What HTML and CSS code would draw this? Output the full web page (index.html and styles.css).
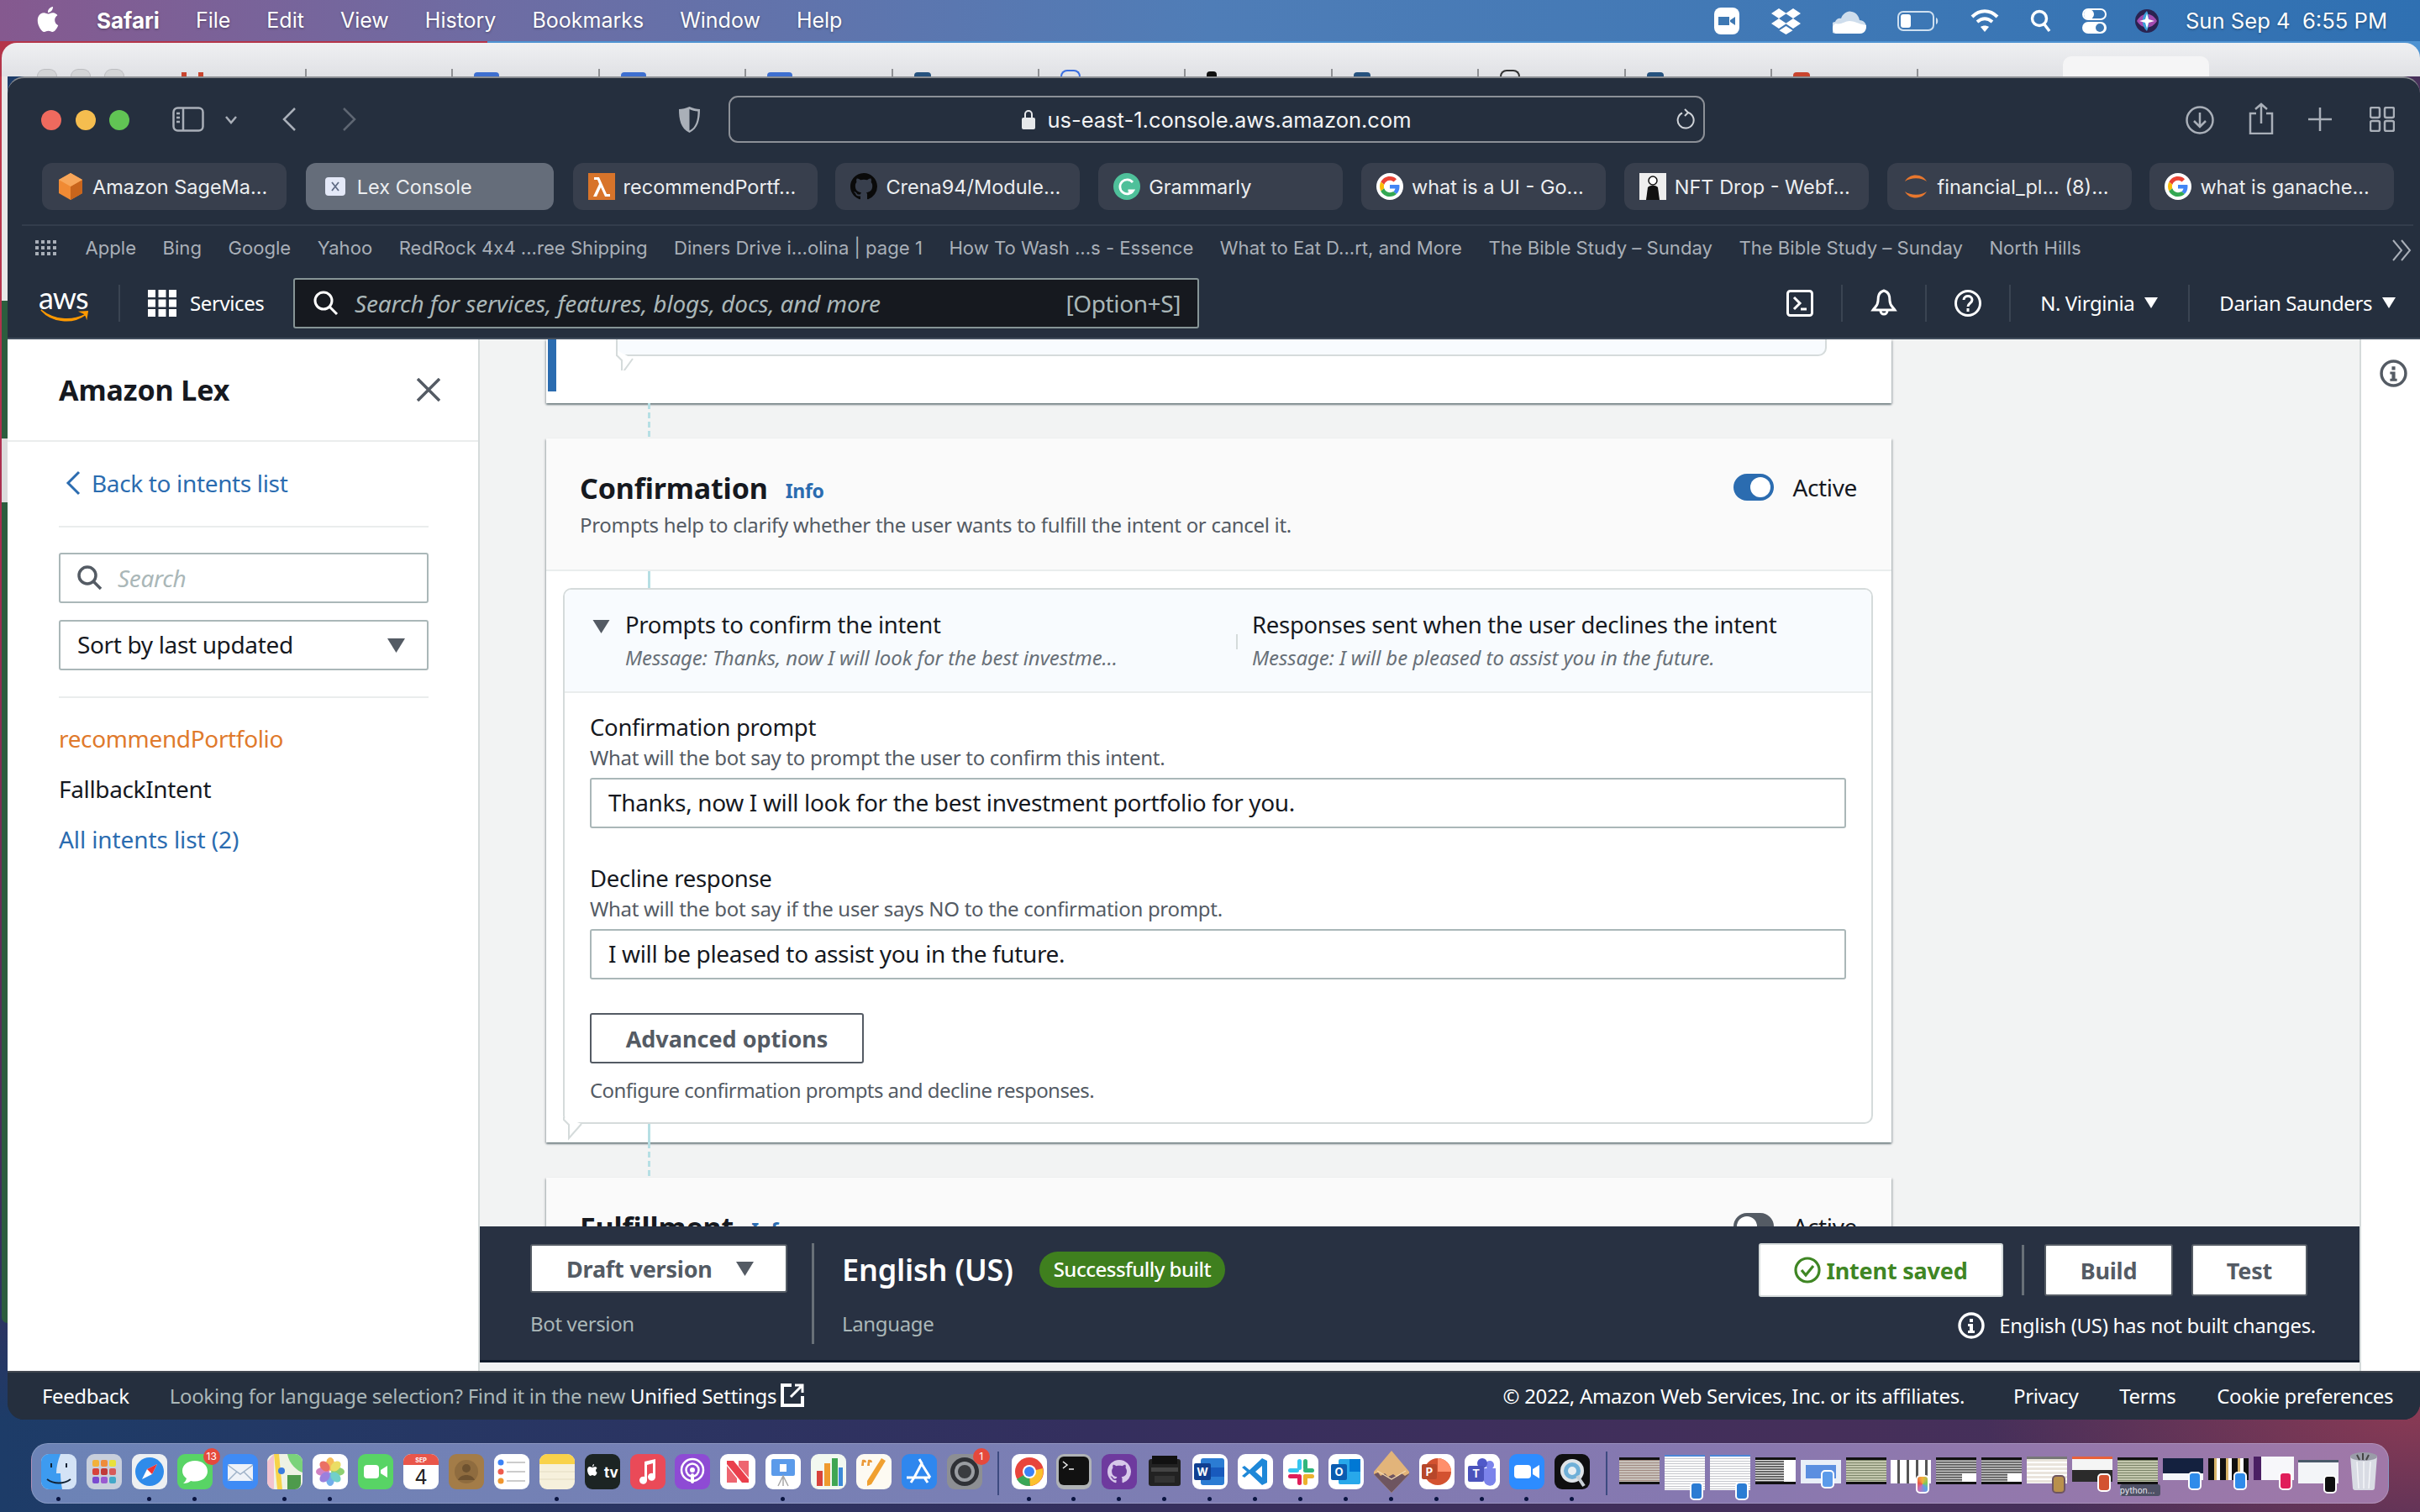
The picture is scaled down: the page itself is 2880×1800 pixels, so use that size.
FILE: index.html
```html
<!DOCTYPE html>
<html lang="en">
<head>
  <meta charset="UTF-8" />
  <title>Amazon Lex - Safari</title>
  <link rel="stylesheet" href="styles.css">
</head>
<body>

<svg class="defs" width="0" height="0">
  <symbol id="google" viewBox="-8 -8 64 64">
    <circle cx="24" cy="24" r="32" fill="#fff"/>
    <path fill="#EA4335" d="M24 9.5c3.54 0 6.71 1.22 9.21 3.6l6.85-6.85C35.9 2.38 30.47 0 24 0 14.62 0 6.51 5.38 2.56 13.22l7.98 6.19C12.43 13.72 17.74 9.5 24 9.5z"/>
    <path fill="#4285F4" d="M46.98 24.55c0-1.57-.15-3.09-.38-4.55H24v9.02h12.94c-.58 2.96-2.26 5.48-4.78 7.18l7.73 6c4.51-4.18 7.09-10.36 7.09-17.65z"/>
    <path fill="#FBBC05" d="M10.53 28.59c-.48-1.45-.76-2.99-.76-4.59s.27-3.14.76-4.59l-7.98-6.19C.92 16.46 0 20.12 0 24c0 3.88.92 7.54 2.56 10.78l7.97-6.19z"/>
    <path fill="#34A853" d="M24 48c6.48 0 11.93-2.13 15.89-5.81l-7.73-6c-2.15 1.45-4.92 2.3-8.16 2.3-6.26 0-11.57-4.22-13.47-9.91l-7.98 6.19C6.51 42.62 14.62 48 24 48z"/>
  </symbol>
  <symbol id="caret" viewBox="0 0 20 16"><path d="M0 0h20L10 16z" fill="currentColor"/></symbol>
  <symbol id="octo" viewBox="0 0 16 16"><path fill="currentColor" d="M8 0C3.58 0 0 3.58 0 8c0 3.54 2.29 6.53 5.47 7.59.4.07.55-.17.55-.38 0-.19-.01-.82-.01-1.49-2.01.37-2.53-.49-2.69-.94-.09-.23-.48-.94-.82-1.13-.28-.15-.68-.52-.01-.53.63-.01 1.08.58 1.23.82.72 1.21 1.87.87 2.33.66.07-.52.28-.87.51-1.07-1.78-.2-3.64-.89-3.64-3.95 0-.87.31-1.59.82-2.15-.08-.2-.36-1.02.08-2.12 0 0 .67-.21 2.2.82.64-.18 1.32-.27 2-.27.68 0 1.36.09 2 .27 1.53-1.04 2.2-.82 2.2-.82.44 1.1.16 1.92.08 2.12.51.56.82 1.27.82 2.15 0 3.07-1.87 3.75-3.65 3.95.29.25.54.73.54 1.48 0 1.07-.01 1.93-.01 2.2 0 .21.15.46.55.38A8.013 8.013 0 0016 8c0-4.42-3.58-8-8-8z"/></symbol>
  <symbol id="infoc" viewBox="0 0 32 32"><circle cx="16" cy="16" r="14" fill="none" stroke="currentColor" stroke-width="3.4"/><path fill="currentColor" d="M14 8h4v4h-4zM12 14h6v8h2v3h-8v-3h2v-5h-2z"/></symbol>
</svg>

<!-- mac menu bar -->
<header class="menubar">
  <svg class="apple" viewBox="0 0 24 24"><path fill="#fff" d="M12.152 6.896c-.948 0-2.415-1.078-3.96-1.04-2.04.027-3.91 1.183-4.961 3.014-2.117 3.675-.546 9.103 1.519 12.09 1.013 1.454 2.208 3.09 3.792 3.039 1.52-.065 2.09-.987 3.935-.987 1.831 0 2.35.987 3.96.948 1.637-.026 2.676-1.48 3.676-2.948 1.156-1.688 1.636-3.325 1.662-3.415-.039-.013-3.182-1.221-3.22-4.857-.026-3.04 2.48-4.494 2.597-4.559-1.429-2.09-3.623-2.324-4.39-2.376-2-.156-3.675 1.09-4.61 1.09zM15.53 3.83c.843-1.012 1.4-2.427 1.245-3.83-1.207.052-2.662.805-3.532 1.818-.78.896-1.454 2.338-1.273 3.714 1.338.104 2.715-.688 3.559-1.701"/></svg>
  <nav class="menu">
    <b>Safari</b><span>File</span><span>Edit</span><span>View</span><span>History</span><span>Bookmarks</span><span>Window</span><span>Help</span>
  </nav>
  <div class="status">
    <svg width="30" height="32" viewBox="0 0 30 32"><rect width="30" height="32" rx="8" fill="#fff"/><path d="M5 11h13v10H5zM19 15l6-4v10l-6-4z" fill="#3e78b3"/></svg>
    <svg width="37" height="32" viewBox="0 0 37 32" fill="#fff"><path d="M10 1l9 6-9 6-9-6zM27 1l9 6-9 6-9-6zM10 13l9 6-9 6-9-6zM27 13l9 6-9 6-9-6zM18.500 22l8 5.300-8 4.700-8-4.700z"/></svg>
    <svg width="40" height="30" viewBox="0 0 40 30"><path fill="#fff" d="M4 30a7 7 0 01-1-14c1-3 4-5 7-4 2-6 8-10 13-8 5 1 8 5 9 10 5 0 8 4 8 8 0 5-3 8-8 8z" opacity=".75"/><path fill="#fff" d="M4 30a7 7 0 01-1-12c7 2 12-3 17-3 6 0 9 3 20 5 0 6-3 10-8 10z"/></svg>
    <svg width="50" height="24" viewBox="0 0 50 24"><rect x="1" y="1" width="42" height="22" rx="6" fill="none" stroke="#cfe0f0" stroke-width="2"/><rect x="4" y="4" width="12" height="16" rx="3" fill="#fff"/><path d="M46 8c3 1 3 7 0 8z" fill="#cfe0f0"/></svg>
    <svg width="34" height="28" viewBox="0 0 34 28" fill="none" stroke="#fff" stroke-width="4"><path d="M2 9c9-9 21-9 30 0M8 15c6-5 12-5 18 0"/><path d="M17 27l-5-6c3-2 7-2 10 0z" fill="#fff" stroke="none"/></svg>
    <svg width="25" height="28" viewBox="0 0 25 28" fill="none" stroke="#fff" stroke-width="3.400"><circle cx="11" cy="11" r="8.500"/><path d="M17 18l6 8"/></svg>
    <svg width="29" height="30" viewBox="0 0 29 30"><rect x="1" y="1" width="27" height="12" rx="6" fill="none" stroke="#fff" stroke-width="2"/><circle cx="8" cy="7" r="6" fill="#fff"/><rect y="16" width="29" height="14" rx="7" fill="#fff"/><circle cx="21" cy="23" r="5" fill="#3e78b3"/></svg>
    <svg class="siri" width="28" height="28" viewBox="0 0 28 28"><circle cx="14" cy="14" r="14" fill="#2a2350"/><path d="M2 14C8 3 20 3 26 14 20 24 8 24 2 14z" fill="#a24bb0"/><path d="M14 26c-7-6-7-18 0-24 3 6 3 18 0 24z" fill="#3aa0d8"/><path d="M14 5l2 7 7 2-7 2-2 7-2-7-7-2 7-2z" fill="#fff"/></svg>
    <span class="clock">Sun Sep 4&nbsp; 6:55 PM</span>
  </div>
</header>

<!-- second safari window behind, only its top shows -->
<div class="behind-line">
  <div class="behind">
    <div class="ghost-lights"><i></i><i></i><i></i></div>
    <div class="ghost-tab"></div>
    <div class="ghost-tab"><em class="cap blue"></em></div>
    <div class="ghost-tab"><em class="cap blue"></em></div>
    <div class="ghost-tab"><em class="cap blue"></em></div>
    <div class="ghost-tab"><em class="cap navy"></em></div>
    <div class="ghost-tab"><em class="cap arc"></em></div>
    <div class="ghost-tab"><em class="cap blk"></em></div>
    <div class="ghost-tab"><em class="cap navy"></em></div>
    <div class="ghost-tab"><em class="cap arc dark"></em></div>
    <div class="ghost-tab"><em class="cap navy"></em></div>
    <div class="ghost-tab"><em class="cap red"></em></div>
    <div class="ghost-tab"></div>
    <div class="ghost-active"></div>
  </div>
</div>

<div class="stage">
  <div class="edge"></div>

  <div class="safari">
    <div class="toolbar">
      <div class="lights"><i class="l-red"></i><i class="l-yel"></i><i class="l-grn"></i></div>
      <svg class="tb sidebar-ic" width="38" height="30" viewBox="0 0 38 30" fill="none" stroke="#a9afb8" stroke-width="2.500"><rect x="1.500" y="1.500" width="35" height="27" rx="5"/><path d="M13 2v26M5 8h4M5 13h4M5 18h4"/></svg>
      <svg class="tb chev" width="14" height="10" viewBox="0 0 14 10" fill="none" stroke="#a9afb8" stroke-width="2.500"><path d="M1 1l6 7 6-7"/></svg>
      <svg class="tb back" width="18" height="30" viewBox="0 0 18 30" fill="none" stroke="#a9afb8" stroke-width="2.500"><path d="M16 2L3 15l13 13"/></svg>
      <svg class="tb fwd" width="18" height="30" viewBox="0 0 18 30" fill="none" stroke="#5e6672" stroke-width="2.500"><path d="M2 2l13 13L2 28"/></svg>
      <svg class="tb shield" width="27" height="33" viewBox="0 0 27 33"><path d="M13.500 1C9 3 5 4 1 4c0 12 2 23 12.500 28C24 27 26 16 26 4c-4 0-8-1-12.500-3z" fill="#a9afb8"/><path d="M13.500 4c3 1.400 6 2.200 10 2.400 0 10-2 19-10 23z" fill="#252f3e"/></svg>
      <div class="url">
        <svg width="16" height="24" viewBox="0 0 16 24"><path d="M4 11V6a4 4 0 018 0v5" fill="none" stroke="#e6e8ea" stroke-width="2"/><rect y="10" width="16" height="14" rx="2" fill="#e6e8ea"/></svg>
        <span>us-east-1.console.aws.amazon.com</span>
        <svg class="reload" width="22" height="26" viewBox="0 0 22 26" fill="none" stroke="#cfd3d8" stroke-width="2"><path d="M14 5a9.500 9.500 0 11-7 .5"/><path d="M10 1l4 4-4 4"/></svg>
      </div>
      <svg class="tb dl" width="36" height="34" viewBox="0 0 36 34" fill="none" stroke="#a9afb8" stroke-width="2.500"><circle cx="18" cy="17" r="15.500"/><path d="M18 8v17M11 18l7 7 7-7"/></svg>
      <svg class="tb share" width="30" height="38" viewBox="0 0 30 38" fill="none" stroke="#a9afb8" stroke-width="2.500"><path d="M9 13H2v24h26V13h-7M15 25V2M8 8l7-6 7 6"/></svg>
      <svg class="tb plus" width="28" height="28" viewBox="0 0 28 28" fill="none" stroke="#a9afb8" stroke-width="2.500"><path d="M14 0v28M0 14h28"/></svg>
      <svg class="tb tabs-ic" width="30" height="30" viewBox="0 0 30 30" fill="none" stroke="#a9afb8" stroke-width="2.500"><rect x="1" y="1" width="11" height="12" rx="2"/><rect x="18" y="1" width="11" height="12" rx="2"/><rect x="1" y="17" width="11" height="12" rx="2"/><rect x="18" y="17" width="11" height="12" rx="2"/></svg>
    </div>

    <div class="tabs">
      <div class="tab">
        <svg width="32" height="32" viewBox="0 0 32 32"><path d="M16 0l14 8v16l-14 8-14-8V8z" fill="#f08a34"/><path d="M16 16l14-8v16l-14 8z" fill="#c9651c"/><path d="M16 0l14 8-14 8L2 8z" fill="#f7a65a"/></svg>
        <span>Amazon SageMa...</span>
      </div>
      <div class="tab active">
        <svg width="24" height="22" viewBox="0 0 24 22"><rect width="24" height="22" rx="4" fill="#e4e9f8"/><path d="M8 6l8 10M16 6L8 16" stroke="#5f6b85" stroke-width="1.800"/></svg>
        <span>Lex Console</span>
      </div>
      <div class="tab">
        <svg width="32" height="32" viewBox="0 0 32 32"><rect width="32" height="32" fill="#d8742a"/><path d="M7 5h6l9 20h4v3h-6l-5-11-5 11H6l7-15-2-5H7z" fill="#fff"/></svg>
        <span>recommendPortf...</span>
      </div>
      <div class="tab">
        <svg class="blk-ic" width="32" height="32"><use href="#octo"/></svg>
        <span>Crena94/Module...</span>
      </div>
      <div class="tab">
        <svg width="32" height="32" viewBox="0 0 32 32"><circle cx="16" cy="16" r="16" fill="#4fc09a"/><path d="M23 11a8.500 8.500 0 10.500 10h-6" fill="none" stroke="#fff" stroke-width="2.800"/></svg>
        <span>Grammarly</span>
      </div>
      <div class="tab"><svg width="32" height="32"><use href="#google"/></svg><span>what is a UI - Go...</span></div>
      <div class="tab">
        <svg width="32" height="32" viewBox="0 0 32 32"><rect width="32" height="32" fill="#eee"/><circle cx="16" cy="9" r="5" fill="#fff" stroke="#111" stroke-width="1.500"/><path d="M8 32l2-15c3-3 9-3 12 0l2 15z" fill="#111"/></svg>
        <span>NFT Drop - Webf...</span>
      </div>
      <div class="tab">
        <svg width="32" height="32" viewBox="0 0 32 32" fill="#e8772e"><path d="M3 10c5-10 21-10 26 0-7-5-19-5-26 0zM3 22c5 10 21 10 26 0-7 5-19 5-26 0z"/></svg>
        <span>financial_pl... (8)...</span>
      </div>
      <div class="tab"><svg width="32" height="32"><use href="#google"/></svg><span>what is ganache...</span></div>
    </div>

    <div class="hair"></div>

    <div class="bookmarks">
      <svg class="bk-grid" width="26" height="18" viewBox="0 0 26 18" fill="#a9afb8"><path d="M0 0h4v4H0zM7 0h4v4H7zM14 0h4v4h-4zM21 0h4v4h-4zM0 7h4v4H0zM7 7h4v4H7zM14 7h4v4h-4zM21 7h4v4h-4zM0 14h4v4H0zM7 14h4v4H7zM14 14h4v4h-4zM21 14h4v4h-4z"/></svg>
      <span>Apple</span><span>Bing</span><span>Google</span><span>Yahoo</span><span>RedRock 4x4 ...ree Shipping</span><span>Diners Drive i...olina | page 1</span><span>How To Wash ...s - Essence</span><span>What to Eat D...rt, and More</span><span>The Bible Study – Sunday</span><span>The Bible Study – Sunday</span><span>North Hills</span>
      <svg class="bk-more" width="26" height="30" viewBox="0 0 26 30" fill="none" stroke="#a9afb8" stroke-width="2"><path d="M3 3l10 12L3 27M13 3l10 12-10 12"/></svg>
    </div>

    <div class="awsnav">
      <div class="aws-logo">
        <span>aws</span>
        <svg width="62" height="16" viewBox="0 0 62 16"><path d="M1 1c16 13 38 15 56 6-16 12-42 10-56-6z" fill="#f90" stroke="#f90" stroke-width="1.500"/><path d="M48 3l13-1-2 12c-1-4-2-6-4-8z" fill="#f90"/></svg>
      </div>
      <div class="services">
        <svg width="34" height="32" viewBox="0 0 34 32" fill="#fff"><path d="M0 0h9v9H0zM12.500 0h9v9h-9zM25 0h9v9h-9zM0 11.500h9v9H0zM12.500 11.500h9v9h-9zM25 11.500h9v9h-9zM0 23h9v9H0zM12.500 23h9v9h-9zM25 23h9v9h-9z"/></svg>
        <span>Services</span>
      </div>
      <div class="searchbox">
        <svg width="30" height="30" viewBox="0 0 30 30" fill="none" stroke="#fff" stroke-width="3"><circle cx="12" cy="12" r="10"/><path d="M19 19l9 9"/></svg>
        <em>Search for services, features, blogs, docs, and more</em>
        <span>[Option+S]</span>
      </div>
      <div class="nav-right">
        <div class="nav-ic"><svg width="32" height="32" viewBox="0 0 32 32" fill="none" stroke="#fff" stroke-width="3"><rect x="1.500" y="1.500" width="29" height="29" rx="3"/><path d="M9 9l7 7-7 7M17 23h7"/></svg></div>
        <div class="nav-ic"><svg width="32" height="34" viewBox="0 0 32 34" fill="none" stroke="#fff" stroke-width="3"><path d="M16 2c-6 2-7 6-7 12s-4 8-6 11h26c-2-3-6-5-6-11S22 4 16 2zM12 26a4 4 0 008 0"/></svg></div>
        <div class="nav-ic"><svg width="32" height="32" viewBox="0 0 32 32" fill="none" stroke="#fff" stroke-width="3"><circle cx="16" cy="16" r="14.500"/><path d="M11 12c0-6 10-6 10 0 0 4-5 4-5 8"/><path d="M16 22v4"/></svg></div>
        <div class="nav-txt">N. Virginia <svg class="nav-caret" width="16" height="13"><use href="#caret"/></svg></div>
        <div class="nav-txt last">Darian Saunders <svg class="nav-caret" width="16" height="13"><use href="#caret"/></svg></div>
      </div>
    </div>

    <div class="main">
      <aside class="side">
        <div class="side-head">
          <h2>Amazon Lex</h2>
          <svg width="28" height="28" viewBox="0 0 28 28" stroke="#545b64" stroke-width="3.500"><path d="M1 1l26 26M27 1L1 27"/></svg>
        </div>
        <div class="side-body">
          <a class="back-link">
            <svg width="18" height="30" viewBox="0 0 18 30" fill="none" stroke="#2b6cb0" stroke-width="3"><path d="M16 2L3 15l13 13"/></svg>
            Back to intents list
          </a>
          <div class="side-rule"></div>
          <div class="side-field search-f">
            <svg width="30" height="30" viewBox="0 0 30 30" fill="none" stroke="#545b64" stroke-width="3.500"><circle cx="12" cy="12" r="10"/><path d="M19 19l9 9"/></svg>
            <em>Search</em>
          </div>
          <div class="side-field select-f">
            <span>Sort by last updated</span>
            <svg class="caret" width="21" height="17"><use href="#caret"/></svg>
          </div>
          <div class="side-rule lower"></div>
          <a class="intent current">recommendPortfolio</a>
          <a class="intent">FallbackIntent</a>
          <a class="intent all">All intents list (2)</a>
        </div>
      </aside>

      <section class="center">
        <div class="canvas">
          <div class="card stub">
            <div class="stub-bar"></div>
            <div class="bubble-stub">
              <svg class="tail" width="24" height="24" viewBox="0 0 24 24"><path d="M1 0l0 6 6 6 0 16L20 10" fill="#fff" stroke="#d5dbdb" stroke-width="2"/></svg>
            </div>
          </div>
          <div class="link dashed"></div>

          <div class="card">
            <div class="card-head">
              <div class="card-title">
                <h3>Confirmation</h3><a class="info">Info</a>
                <div class="toggle-wrap"><i class="toggle on"></i><span>Active</span></div>
              </div>
              <p>Prompts help to clarify whether the user wants to fulfill the intent or cancel it.</p>
            </div>
            <div class="link solid"></div>
            <div class="box">
              <div class="box-head">
                <div class="col-a">
                  <svg class="caret" width="21" height="16"><use href="#caret"/></svg>
                  <div>
                    <h4>Prompts to confirm the intent</h4>
                    <em>Message: Thanks, now I will look for the best investme…</em>
                  </div>
                </div>
                <div class="col-b">
                  <h4>Responses sent when the user declines the intent</h4>
                  <em>Message: I will be pleased to assist you in the future.</em>
                </div>
              </div>
              <div class="box-body">
                <label class="fld-label">Confirmation prompt</label>
                <div class="fld-desc">What will the bot say to prompt the user to confirm this intent.</div>
                <input class="fld-input" value="Thanks, now I will look for the best investment portfolio for you." />
                <label class="fld-label second">Decline response</label>
                <div class="fld-desc">What will the bot say if the user says NO to the confirmation prompt.</div>
                <input class="fld-input" value="I will be pleased to assist you in the future." />
                <button class="adv">Advanced options</button>
                <div class="fld-desc conf">Configure confirmation prompts and decline responses.</div>
              </div>
            </div>
            <div class="box-foot">
              <svg class="tail" width="28" height="28" viewBox="0 0 28 28"><path d="M1 0l0 3 6 6 0 16L22 8" fill="#fff" stroke="#d5dbdb" stroke-width="2"/></svg>
              <div class="link solid tall-link"></div>
            </div>
          </div>
          <div class="link dashed"></div>

          <div class="card">
            <div class="card-head">
              <div class="card-title">
                <h3>Fulfillment</h3><a class="info">Info</a>
                <div class="toggle-wrap"><i class="toggle"></i><span>Active</span></div>
              </div>
            </div>
          </div>
        </div>

        <div class="bar">
          <div class="bar-ver">
            <button class="bar-btn draft">Draft version <svg width="21" height="17"><use href="#caret"/></svg></button>
            <small>Bot version</small>
          </div>
          <div class="bar-sep"></div>
          <div class="bar-lang">
            <div class="lang-row"><b>English (US)</b><span class="badge">Successfully built</span></div>
            <small>Language</small>
          </div>
          <div class="bar-right">
            <div class="bar-actions">
              <button class="bar-btn saved">
                <svg width="32" height="32" viewBox="0 0 32 32" fill="none" stroke="#3f8624" stroke-width="3.200"><circle cx="16" cy="16" r="14"/><path d="M9 16l5 6 9-11"/></svg>
                Intent saved
              </button>
              <i class="act-sep"></i>
              <button class="bar-btn build">Build</button>
              <button class="bar-btn test">Test</button>
            </div>
            <div class="bar-note">
              <svg width="32" height="32"><use href="#infoc"/></svg>
              <span>English (US) has not built changes.</span>
            </div>
          </div>
        </div>
        <div class="bar-gap"></div>
      </section>

      <aside class="tools"><svg class="tools-ic" width="33" height="33"><use href="#infoc"/></svg></aside>
    </div>

    <footer class="foot">
      <span class="f-white">Feedback</span>
      <span class="f-lang">Looking for language selection? Find it in the new <b>Unified Settings</b></span>
      <svg class="f-ext" width="28" height="28" viewBox="0 0 28 28" fill="none" stroke="#fff"><path stroke-width="4" d="M13 2H2v24h24V15"/><path stroke-width="3" d="M12 16L26 2M17 2h9v9"/></svg>
      <span class="f-right">© 2022, Amazon Web Services, Inc. or its affiliates.</span>
      <span class="f-link">Privacy</span>
      <span class="f-link">Terms</span>
      <span class="f-link">Cookie preferences</span>
    </footer>
  </div>
</div>

<!-- dock -->
<div class="dock">
  <div class="app on"><svg viewBox="0 0 42 42"><rect width="42" height="42" rx="9" fill="#d4e3f6"/><path d="M9 0h14c-3 8-5 15-5 23h5c0 7 1 13 2 19H9a9 9 0 01-9-9V9a9 9 0 019-9z" fill="#3d9bf0"/><path d="M12 11v5M30 11v5M7 30c8 6 20 6 28 0" stroke="#123" stroke-width="2" fill="none"/></svg></div>
  <div class="app"><svg viewBox="0 0 42 42"><rect width="42" height="42" rx="9" fill="#c8cfdc"/><g><rect x="7" y="7" width="8" height="8" rx="2" fill="#f2b13a"/><rect x="17" y="7" width="8" height="8" rx="2" fill="#ee8c3c"/><rect x="27" y="7" width="8" height="8" rx="2" fill="#e8e13c"/><rect x="7" y="17" width="8" height="8" rx="2" fill="#d7423c"/><rect x="17" y="17" width="8" height="8" rx="2" fill="#c03a3a"/><rect x="27" y="17" width="8" height="8" rx="2" fill="#d75a5a"/><rect x="7" y="27" width="8" height="8" rx="2" fill="#7a4ad0"/><rect x="17" y="27" width="8" height="8" rx="2" fill="#9a5ad0"/><rect x="27" y="27" width="8" height="8" rx="2" fill="#44a8c8"/></g></svg></div>
  <div class="app on"><svg viewBox="0 0 42 42"><rect width="42" height="42" rx="9" fill="#eef0f2"/><circle cx="21" cy="21" r="17" fill="#2f8bea"/><path d="M30 12L18 18l-6 12 12-6z" fill="#fff"/><path d="M30 12L18 18l6 6z" fill="#e33"/></svg></div>
  <div class="app on"><svg viewBox="0 0 42 42"><rect width="42" height="42" rx="9" fill="#58d465"/><path d="M21 8c-9 0-15 5-15 12 0 4 2 7 5 9-1 3-2 4-4 6 4 0 7-1 9-3 2 .400 3 .500 5 .500 9 0 15-5 15-12S30 8 21 8z" fill="#fff"/></svg><b class="dock-badge">13</b></div>
  <div class="app"><svg viewBox="0 0 42 42"><rect width="42" height="42" rx="9" fill="#3f8bf5"/><rect x="6" y="12" width="30" height="20" rx="2" fill="#eef2f8"/><path d="M6 13l15 11 15-11M6 32l11-11M36 32L25 21" fill="none" stroke="#9fb2c8" stroke-width="1.500"/></svg></div>
  <div class="app on"><svg viewBox="0 0 42 42"><rect width="42" height="42" rx="9" fill="#eef2e4"/><path d="M12 0h12c2 12 12 20 18 22v-13a9 9 0 00-9-9z" fill="#7ad37a"/><path d="M8 0h6l4 42h-6z" fill="#f7d34a"/><path d="M0 9l8-9v42H9a9 9 0 01-9-9z" fill="#f3c3cf"/><circle cx="17" cy="20" r="4" fill="#3a7de0"/><path d="M24 25h16v10a7 7 0 01-7 7h-9z" fill="#4e9a4c"/></svg></div>
  <div class="app on"><svg viewBox="0 0 42 42"><rect width="42" height="42" rx="9" fill="#fff"/><g opacity=".85"><ellipse cx="21" cy="12" rx="5" ry="8" fill="#f5b13a"/><ellipse cx="21" cy="30" rx="5" ry="8" fill="#5aa0e8"/><ellipse cx="12" cy="21" rx="8" ry="5" fill="#c86cb8"/><ellipse cx="30" cy="21" rx="8" ry="5" fill="#7ac85a"/><ellipse cx="14.500" cy="14.500" rx="7" ry="5" fill="#e8584a" transform="rotate(45 14.500 14.500)"/><ellipse cx="27.500" cy="14.500" rx="7" ry="5" fill="#e8d84a" transform="rotate(-45 27.500 14.500)"/><ellipse cx="14.500" cy="27.500" rx="7" ry="5" fill="#8a6ad8" transform="rotate(-45 14.500 27.500)"/><ellipse cx="27.500" cy="27.500" rx="7" ry="5" fill="#5ac8c0" transform="rotate(45 27.500 27.500)"/></g></svg></div>
  <div class="app"><svg viewBox="0 0 42 42"><rect width="42" height="42" rx="9" fill="#58d465"/><rect x="7" y="13" width="18" height="16" rx="4" fill="#fff"/><path d="M27 19l8-5v14l-8-5z" fill="#fff"/></svg></div>
  <div class="app"><svg viewBox="0 0 42 42"><rect width="42" height="42" rx="9" fill="#fff"/><path d="M0 13V9a9 9 0 019-9h24a9 9 0 019 9v4z" fill="#e9564a"/><text x="21" y="10" class="ic-sep">SEP</text><text x="21" y="36" class="ic-day">4</text></svg></div>
  <div class="app"><svg viewBox="0 0 42 42"><rect width="42" height="42" rx="9" fill="#a37c48"/><circle cx="21" cy="21" r="14" fill="#8f6c3f"/><circle cx="21" cy="17" r="5" fill="#6e5230"/><path d="M11 31c3-8 17-8 20 0" fill="#6e5230"/></svg></div>
  <div class="app"><svg viewBox="0 0 42 42"><rect width="42" height="42" rx="9" fill="#fff"/><circle cx="8" cy="10" r="3.500" fill="#3b82f6"/><circle cx="8" cy="21" r="3.500" fill="#ef5b4c"/><circle cx="8" cy="32" r="3.500" fill="#f0962e"/><path d="M15 10h22M15 21h22M15 32h22" stroke="#ccc" stroke-width="2"/></svg></div>
  <div class="app on"><svg viewBox="0 0 42 42"><rect width="42" height="42" rx="9" fill="#f6f0dc"/><path d="M0 12V9a9 9 0 019-9h24a9 9 0 019 9v3z" fill="#f9d24a"/><path d="M0 21h42M0 30h42" stroke="#e4dcc2" stroke-width="1"/></svg></div>
  <div class="app"><svg viewBox="0 0 42 42"><rect width="42" height="42" rx="9" fill="#1c2423"/><text x="23" y="28" class="ic-tv">tv</text><path d="M13 15c-2 0-3 1-4 1s-2-1-3-1c-2 0-3 2-3 4 0 3 2 7 3.500 7 1 0 1.500-1 2.500-1s1.500 1 2.500 1c1.500 0 3-3 3-4-2-1-2-4 0-5-.5-1-1-2-2-2zM9 15c1 0 2-1 2-3-1 0-2 1-2 3z" fill="#fff"/></svg></div>
  <div class="app"><svg viewBox="0 0 42 42"><rect width="42" height="42" rx="9" fill="#ea4a58"/><path d="M17 9l13-3v21a4.500 4.500 0 11-3-4V11l-7 2v18a4.500 4.500 0 11-3-4z" fill="#fff"/></svg></div>
  <div class="app"><svg viewBox="0 0 42 42"><rect width="42" height="42" rx="9" fill="#8e4bd4"/><circle cx="21" cy="19" r="13" fill="none" stroke="#fff" stroke-width="2.500"/><circle cx="21" cy="19" r="7.500" fill="none" stroke="#fff" stroke-width="2.500"/><circle cx="21" cy="19" r="3" fill="#fff"/><rect x="19" y="23" width="4" height="12" rx="2" fill="#fff"/></svg></div>
  <div class="app"><svg viewBox="0 0 42 42"><rect width="42" height="42" rx="9" fill="#fff"/><path d="M8 8h8l18 22v4h-8L8 12z" fill="#ea3f4c"/><path d="M8 14l12 15v5H8zM22 8h12v20L22 14z" fill="#ea3f4c" opacity=".8"/></svg></div>
  <div class="app on"><svg viewBox="0 0 42 42"><rect width="42" height="42" rx="9" fill="#fff"/><rect x="7" y="6" width="28" height="20" rx="2" fill="#5b9bea"/><rect x="17" y="12" width="8" height="9" fill="#fff"/><path d="M21 26v12M15 38l6-12 6 12" stroke="#a8a8a8" stroke-width="1.500" fill="none"/></svg></div>
  <div class="app"><svg viewBox="0 0 42 42"><rect width="42" height="42" rx="9" fill="#f2f8f0"/><rect x="7" y="20" width="7" height="18" fill="#d8433c"/><rect x="16" y="11" width="7" height="27" fill="#ef9a2e"/><rect x="25" y="5" width="7" height="33" fill="#3fa652"/><rect x="33" y="16" width="5" height="22" fill="#3c8ad8"/></svg></div>
  <div class="app"><svg viewBox="0 0 42 42"><rect width="42" height="42" rx="9" fill="#fdfaf2"/><path d="M30 5l5 3-17 28-5 2 0-6z" fill="#f0a030"/><path d="M7 7c3-1 5 0 5 3l-3 0 0 4-3 0zM14 7c3-1 5 0 5 3l-3 0 0 4-3 0z" fill="#eb9a3a"/></svg></div>
  <div class="app"><svg viewBox="0 0 42 42"><rect width="42" height="42" rx="9" fill="#2f87ee"/><path d="M21 6l3 5-9 17h-6M24 12l10 16M6 28h28M11 34l4-6M31 34l-4-6" stroke="#fff" stroke-width="3" fill="none"/></svg></div>
  <div class="app"><svg viewBox="0 0 42 42"><rect width="42" height="42" rx="9" fill="#8d8f93"/><circle cx="21" cy="21" r="17" fill="#2f3136"/><circle cx="21" cy="21" r="12" fill="#9a9da2"/><circle cx="21" cy="21" r="8" fill="#3a3c40"/></svg><b class="dock-badge">1</b></div>

  <i class="dock-sep first"></i>

  <div class="app on"><svg viewBox="0 0 42 42"><rect width="42" height="42" rx="9" fill="#fff"/><circle cx="21" cy="21" r="17" fill="#e8453c"/><path d="M21 21L6 30a17 17 0 0016 8z" fill="#3aa757"/><path d="M21 21l16-4a17 17 0 01-15 21z" fill="#fbc02d"/><circle cx="21" cy="21" r="8" fill="#fff"/><circle cx="21" cy="21" r="6" fill="#3b82f6"/></svg></div>
  <div class="app on"><svg viewBox="0 0 42 42"><rect width="42" height="42" rx="9" fill="#b0b3b6"/><rect x="3" y="3" width="36" height="34" rx="6" fill="#111"/><path d="M8 9l5 4-5 4M15 18h6" stroke="#eee" stroke-width="1.500" fill="none"/></svg></div>
  <div class="app on"><svg viewBox="0 0 42 42"><rect width="42" height="42" rx="9" fill="#6e3a9e"/><g transform="translate(7 7) scale(1.750)" color="#d7c8ea"><use href="#octo" width="16" height="16"/></g></svg></div>
  <div class="app on"><svg viewBox="0 0 42 42"><rect x="2" y="6" width="38" height="32" rx="3" fill="#222"/><rect x="6" y="2" width="30" height="10" fill="#111"/><rect x="5" y="16" width="32" height="5" fill="#444"/><rect x="9" y="26" width="24" height="8" fill="#333"/></svg></div>
  <div class="app on"><svg viewBox="0 0 42 42"><rect width="42" height="42" rx="9" fill="#fff"/><rect x="10" y="5" width="28" height="32" rx="3" fill="#2b7cd3"/><rect x="10" y="16" width="28" height="11" fill="#185abd"/><rect x="2" y="11" width="20" height="20" rx="2" fill="#103f91"/><text x="12" y="26" class="ic-letter">W</text></svg></div>
  <div class="app on"><svg viewBox="0 0 42 42"><rect width="42" height="42" rx="9" fill="#fff"/><path d="M29 5l6 3v26l-6 3L14 23l-6 5-3-2 6-5-6-5 3-2 6 5zM29 14l-8 7 8 7z" fill="#1e88d8"/></svg></div>
  <div class="app on"><svg viewBox="0 0 42 42"><rect width="42" height="42" rx="9" fill="#fff"/><rect x="17" y="6" width="5" height="13" rx="2.500" fill="#36c5f0"/><rect x="6" y="17" width="13" height="5" rx="2.500" fill="#36c5f0"/><rect x="24" y="6" width="5" height="13" rx="2.500" fill="#2eb67d"/><rect x="24" y="17" width="13" height="5" rx="2.500" fill="#2eb67d"/><rect x="24" y="24" width="13" height="5" rx="2.500" fill="#ecb22e"/><rect x="24" y="24" width="5" height="13" rx="2.500" fill="#ecb22e"/><rect x="17" y="24" width="5" height="13" rx="2.500" fill="#e01e5a"/><rect x="6" y="24" width="13" height="5" rx="2.500" fill="#e01e5a"/></svg></div>
  <div class="app on"><svg viewBox="0 0 42 42"><rect width="42" height="42" rx="9" fill="#fff"/><rect x="12" y="6" width="26" height="30" rx="2" fill="#28a8ea"/><rect x="25" y="6" width="13" height="15" fill="#0078d4"/><rect x="3" y="12" width="19" height="19" rx="2" fill="#0a5cb0"/><text x="12.500" y="26" class="ic-letter">O</text></svg></div>
  <div class="app on tall"><svg viewBox="0 0 42 50"><path d="M21 0l21 25v3L21 50 0 28v-3z" fill="#e2b47a"/><path d="M0 28l5-2 3 4 5-3 4 4 6-3 4 3 6-4 4 3 5-3v1L21 50 0 28z" fill="#6e5560"/><path d="M4 24l17 10 17-10" stroke="#f3d9ae" stroke-width="1.200" fill="none"/></svg></div>
  <div class="app on"><svg viewBox="0 0 42 42"><rect width="42" height="42" rx="9" fill="#fff"/><circle cx="22" cy="21" r="16" fill="#d35230"/><path d="M22 5a16 16 0 0116 16H22z" fill="#ff8f6b"/><rect x="3" y="12" width="18" height="18" rx="2" fill="#b7472a"/><text x="12" y="26" class="ic-letter">P</text></svg></div>
  <div class="app on"><svg viewBox="0 0 42 42"><rect width="42" height="42" rx="9" fill="#fff"/><circle cx="30" cy="13" r="5" fill="#7b83eb"/><circle cx="21" cy="11" r="6" fill="#5059c9"/><path d="M21 17h16v12a7 7 0 01-14 3z" fill="#7b83eb"/><rect x="4" y="14" width="19" height="19" rx="2" fill="#4b53bc"/><text x="13.500" y="28" class="ic-letter">T</text></svg></div>
  <div class="app on"><svg viewBox="0 0 42 42"><rect width="42" height="42" rx="9" fill="#2d8cff"/><rect x="6" y="13" width="20" height="16" rx="4" fill="#fff"/><path d="M28 18l8-5v16l-8-5z" fill="#fff"/></svg></div>
  <div class="app on"><svg viewBox="0 0 42 42"><rect width="42" height="42" rx="9" fill="#0f0f10"/><circle cx="21" cy="20" r="14" fill="#dfe4e8"/><circle cx="21" cy="20" r="10" fill="#6fb0d8"/><circle cx="21" cy="20" r="5" fill="#e8eef2"/><path d="M27 26l8 12" stroke="#c9d0d6" stroke-width="4"/></svg></div>

  <i class="dock-sep"></i>

  <div class="thumb t-dark t-beige"></div>
  <div class="thumb t-doc"><i class="mini word"></i></div>
  <div class="thumb t-doc"><i class="mini word"></i></div>
  <div class="thumb t-dark t-lines"></div>
  <div class="thumb t-slide"><i class="mini keyn"></i></div>
  <div class="thumb t-dark t-green"></div>
  <div class="thumb t-white"><i class="mini photos"></i></div>
  <div class="thumb t-dark t-noise"></div>
  <div class="thumb t-dark t-noise"></div>
  <div class="thumb t-table"><i class="mini box"></i></div>
  <div class="thumb t-ppt"><i class="mini ppt"></i></div>
  <div class="thumb t-dark t-green"><b class="t-label">python...</b></div>
  <div class="thumb t-navy"><i class="mini safari"></i></div>
  <div class="thumb t-shop"><i class="mini safari"></i></div>
  <div class="thumb t-purple"><i class="mini slack"></i></div>
  <div class="thumb t-white wide"><i class="mini qt"></i></div>

  <svg class="trash" width="36" height="46" viewBox="0 0 36 46"><path d="M2 5h32l-3 39a3 3 0 01-3 2H8a3 3 0 01-3-2z" fill="#d9dce4"/><ellipse cx="18" cy="6" rx="16" ry="5" fill="#9a9ca8"/><path d="M10 4l3 6M17 2l0 8M24 4l-3 6" stroke="#444" stroke-width="2"/><path d="M10 12l2 32M18 12v32M26 12l-2 32" stroke="#f4f5f8" stroke-width="1.500"/></svg>
</div>

</body>
</html>
```

FILE: styles.css
```css
* { box-sizing: border-box; }

html, body { margin: 0; padding: 0; }

body {
  width: 2880px;
  height: 1800px;
  overflow: hidden;
  display: flex;
  flex-direction: column;
  font-family: "Noto Sans", "Liberation Sans", sans-serif;
  background:
    radial-gradient(520px 210px at 2880px 1680px, #8a3a54, rgba(138,58,84,0)),
    linear-gradient(90deg, #1d3c68, #342f5e 45%, #452f5a 75%, #47305a);
}

.defs { position: absolute; }

h2, h3, h4, p { margin: 0; }
em { font-style: italic; }
button { font-family: inherit; cursor: pointer; }

/* menu bar */
.menubar {
  height: 49px;
  flex: none;
  display: flex;
  align-items: center;
  padding-left: 42px;
  color: #fff;
  font-family: Inter, "Liberation Sans", sans-serif;
  font-size: 25px;
  text-shadow: 0 1px 3px rgba(0,0,0,.35);
  background: linear-gradient(90deg, #85598f, #6e6ca3 20%, #4f7db7 50%, #3c77b5 80%, #2f70b2);
}
.apple { width: 30px; height: 32px; margin-top: -4px; }
.menu { display: flex; gap: 43px; margin-left: 43px; }
.menu b { font-size: 26px; font-weight: 700; }
.status { margin-left: auto; display: flex; align-items: center; gap: 37px; padding-right: 39px; }
.siri { margin-left: -3px; }
.clock { margin-left: -5px; font-size: 25.600px; }

/* the other window */
.behind-line {
  height: 42px;
  flex: none;
  padding-top: 2px;
  background: linear-gradient(90deg, #b4354a 580px, #4f93d2 580px);
}
.behind {
  height: 40px;
  margin-left: 2px;
  border-radius: 18px 18px 0 0;
  background: linear-gradient(#eff0f2, #e0e1e5);
  display: flex;
  align-items: flex-end;
  overflow: hidden;
}
.ghost-lights { position: relative; display: flex; gap: 16px; width: 361px; padding-left: 42px; flex: none; }
.ghost-lights i { width: 24px; height: 9px; border-radius: 12px 12px 0 0; background: #d3d4d6; border: 1px solid #bcbdc0; border-bottom: 0; }
.ghost-lights::after { content: ""; position: absolute; left: 214px; bottom: 0; width: 26px; height: 5px; background: linear-gradient(90deg, #c9452f 6px, transparent 6px 20px, #c9452f 20px); }
.ghost-tab { width: 174.400px; height: 9px; flex: none; border-left: 2px solid #8f9094; position: relative; }
.cap { position: absolute; left: 25px; bottom: 0; width: 30px; height: 5px; border-radius: 4px 4px 0 0; }
.cap.red { background: #c9452f; width: 20px; }
.cap.blue { background: #3e6fd0; }
.cap.navy { background: #26527e; width: 20px; }
.cap.blk { background: #111; width: 12px; height: 6px; }
.cap.arc { background: none; border: 2px solid #3b6fe0; border-bottom: 0; width: 24px; height: 8px; border-radius: 12px 12px 0 0; }
.cap.arc.dark { border-color: #333; }
.ghost-active { width: 174px; height: 24px; margin-left: -1px; border-radius: 10px 10px 0 0; background: #f5f5f6; flex: none; }

.stage { display: flex; height: 1599px; flex: none; }
.edge {
  width: 9px;
  flex: none;
  background: linear-gradient(#c23a4a, #a82d50 35%, #3a2d5c 85%, rgba(29,60,104,0));
}
.edge::before {
  content: "";
  display: block;
  height: 1484px;
  margin-left: 2px;
  border-radius: 0 0 0 10px;
  background: linear-gradient(#e8e8e8 0, #e8e8e8 267px, #2c5d3e 267px, #2c5d3e 431px, #dcdcdc 431px, #dcdcdc 507px, #2c5d3e 507px);
}

/* safari window */
.safari {
  width: 2871px;
  height: 1599px;
  display: flex;
  flex-direction: column;
  background: #252f3e;
  border-top: 2px solid #8b8e93;
  border-radius: 20px;
  overflow: hidden;
  color: #fff;
}

.toolbar { height: 101px; flex: none; display: flex; align-items: flex-start; padding: 21px 0 0 40px; }
.tb { flex: none; margin-top: 13px; }
.lights { display: flex; gap: 16.500px; margin-top: 17px; }
.lights i { width: 24px; height: 24px; border-radius: 50%; }
.l-red { background: #ee6a5e; }
.l-yel { background: #f5bd4f; }
.l-grn { background: #61c454; }
.sidebar-ic { margin-left: 51px; }
.chev { margin: 24px 0 0 25px; }
.back { margin-left: 53px; }
.fwd { margin-left: 54px; }
.shield { margin: 12px 0 0 382px; }
.url {
  width: 1162px;
  height: 56px;
  margin-left: 33px;
  flex: none;
  position: relative;
  display: flex;
  align-items: center;
  justify-content: center;
  gap: 14px;
  border: 2.500px solid #8c9097;
  border-radius: 11px;
  font-family: Inter, "Liberation Sans", sans-serif;
  font-size: 25.500px;
  color: #f2f3f4;
}
.reload { position: absolute; right: 10px; top: 13px; }
.dl { margin: 12px 0 0 571px; }
.share { margin: 8px 0 0 40px; }
.plus { margin: 14px 0 0 41px; }
.tabs-ic { margin: 13px 0 0 45px; }

.tabs { height: 56px; flex: none; display: flex; gap: 21.800px; padding-left: 41px; }
.tab {
  width: 291px;
  display: flex;
  align-items: center;
  gap: 10px;
  padding-left: 18px;
  border-radius: 12px;
  background: #383f4d;
  font-family: Inter, "Liberation Sans", sans-serif;
  font-size: 23.500px;
  color: #eceef0;
  white-space: nowrap;
}
.tab.active { width: 295px; margin: 0 1px; background: #656d7a; padding-left: 23px; gap: 14px; }
.blk-ic { color: #0a0a0a; }

.hair { height: 2px; flex: none; margin: 17px 8px 0 17px; background: #333d4c; }

.bookmarks {
  height: 52px;
  flex: none;
  display: flex;
  align-items: center;
  gap: 31.500px;
  padding-left: 33px;
  font-family: Inter, "Liberation Sans", sans-serif;
  font-feature-settings: "calt" 0;
  font-size: 22.100px;
  color: #a9afb8;
  white-space: nowrap;
}
.bk-grid { margin-right: 2px; }
.bk-more { margin-left: auto; margin-right: 9px; margin-top: 6px; }

.awsnav {
  height: 83px;
  flex: none;
  display: flex;
  align-items: center;
  padding: 0 0 2px 37px;
  border-bottom: 2px solid #414d5c;
  font-size: 24px;
  letter-spacing: -.4px;
}
.aws-logo { width: 97px; height: 44px; border-right: 2px solid #3a4452; display: flex; flex-direction: column; }
.aws-logo span { font-family: Lato, sans-serif; font-size: 36px; line-height: 30px; letter-spacing: -1px; }
.aws-logo svg { margin-top: -1px; }
.services { display: flex; align-items: center; gap: 16px; margin-left: 33px; width: 173px; }
.searchbox {
  width: 1078px;
  height: 60px;
  display: flex;
  align-items: center;
  padding: 0 20px 0 22px;
  background: #16191f;
  border: 2px solid #879596;
  border-radius: 3px;
  font-size: 28px;
  letter-spacing: -.15px;
  color: #aab7b8;
}
.searchbox em { margin-left: 19px; }
.searchbox span { margin-left: auto; letter-spacing: -.4px; }
.nav-right { margin-left: auto; display: flex; align-items: center; height: 44px; }
.nav-ic { width: 100px; height: 44px; display: flex; align-items: center; justify-content: center; border-right: 2px solid #3a4452; }
.nav-txt { display: flex; align-items: center; gap: 12px; height: 44px; padding: 0 36px 0 35px; border-right: 2px solid #3a4452; white-space: nowrap; }
.nav-txt.last { border-right: 0; padding-right: 29px; }

/* console area */
.main { height: 1228px; flex: none; display: flex; color: #16191f; }

.side { width: 562px; flex: none; background: #fff; border-right: 2px solid #d5dbdb; }
.side-head {
  height: 122px;
  display: flex;
  align-items: center;
  justify-content: space-between;
  padding: 0 45px 0 61px;
  border-bottom: 2px solid #eaeded;
}
.side-head h2 { font-size: 34px; font-weight: 700; letter-spacing: -.1px; }
.side-body { padding: 0 0 0 61px; width: 501px; font-size: 28px; letter-spacing: -.35px; }
.back-link { display: flex; align-items: center; gap: 13px; height: 40px; margin-top: 29px; padding-left: 8px; color: #2b6cb0; }
.side-rule { height: 2px; background: #eaeded; margin-top: 31px; }
.side-field {
  height: 60px;
  display: flex;
  align-items: center;
  border: 2px solid #aab7b8;
  border-radius: 3px;
  margin-top: 30px;
}
.search-f { padding-left: 20px; color: #aab7b8; }
.search-f em { margin-left: 18px; }
.select-f { margin-top: 20px; padding: 0 26px 0 20px; justify-content: space-between; }
.select-f span { margin-top: -2px; }
.caret { color: #545b64; flex: none; }
.side-rule.lower { margin-top: 31px; margin-bottom: 28px; }
.intent { display: block; height: 60px; line-height: 40px; }
.intent.current { color: #e07a2c; }
.intent.all { color: #2b6cb0; letter-spacing: -.1px; }

.center { flex: 1; min-width: 0; display: flex; flex-direction: column; background: #f2f3f3; }
.canvas { height: 1056px; flex: none; overflow: hidden; padding-left: 79px; }

.card {
  width: 1601px;
  background: #fff;
  box-shadow: 0 2px 2px 0 rgba(0,28,36,.45), 2px 1px 2px 0 rgba(0,28,36,.12), -2px 1px 2px 0 rgba(0,28,36,.12);
}
.stub { height: 76px; display: flex; align-items: flex-start; }
.stub-bar { width: 10px; height: 62px; margin-left: 2px; background: #2b6cb0; }
.bubble-stub {
  position: relative;
  width: 1441px;
  height: 20px;
  margin-left: 71px;
  background: #f8fbfe;
  border: 2px solid #d5dbdb;
  border-top: 0;
  border-radius: 0 0 10px 0;
}
.bubble-stub .tail { position: absolute; left: -2px; top: 13px; }

.link { width: 3px; margin-left: 121px; }
.link.dashed { height: 42px; background: repeating-linear-gradient(#b6dfe4 0 7px, transparent 7px 11px); }
.link.solid { height: 20px; background: #b6dfe4; }
.link.solid.tall-link { height: 22px; }

.card-head { height: 158px; padding: 38px 22px 0 40px; background: #fafafa; border-bottom: 2px solid #eaeded; }
.card-title { display: flex; align-items: center; height: 42px; }
.card-title h3 { font-size: 34px; font-weight: 700; letter-spacing: -.15px; }
.info { margin: 6px 0 0 21px; font-size: 23px; font-weight: 700; color: #2b6cb0; letter-spacing: -.3px; }
.toggle-wrap { margin-left: auto; display: flex; align-items: center; gap: 22px; font-size: 28px; letter-spacing: -.35px; padding-right: 19px; margin-top: -3px; }
.toggle { position: relative; width: 48px; height: 32px; border-radius: 16px; background: #545b64; }
.toggle::after { content: ""; position: absolute; left: 4px; top: 4px; width: 24px; height: 24px; border-radius: 50%; background: #fff; }
.toggle.on { background: #2b6cb0; }
.toggle.on::after { left: 20px; }
.card-head p { margin-top: 7px; font-size: 24px; line-height: 32px; color: #545b64; letter-spacing: -.3px; }

.box {
  width: 1559px;
  height: 638px;
  margin-left: 20px;
  border: 2px solid #d5dbdb;
  border-radius: 10px;
  background: #fff;
}
.box-head {
  height: 123px;
  display: flex;
  background: #f8fbfe;
  border-bottom: 2px solid #eaeded;
  border-radius: 8px 8px 0 0;
}
.box-head h4 { font-size: 27.500px; font-weight: 400; line-height: 40px; letter-spacing: -.3px; }
.box-head em { display: block; margin-top: 1px; font-size: 24px; line-height: 36px; color: #687078; letter-spacing: -.1px; white-space: nowrap; }
.col-a { width: 799px; display: flex; align-items: flex-start; gap: 18px; padding: 22px 0 0 33px; }
.col-a .caret { margin-top: 14px; }
.col-b { flex: 1; padding: 22px 0 0 19px; position: relative; }
.col-b::before { content: ""; position: absolute; left: 0; top: 53px; width: 2px; height: 18px; background: #d5dbdb; }

.box-body { padding: 21px 30px 0; }
.fld-label { display: block; font-size: 27.500px; line-height: 40px; letter-spacing: -.3px; }
.fld-label.second { margin-top: 40px; }
.fld-desc { font-size: 24px; line-height: 32px; color: #545b64; letter-spacing: -.3px; }
.fld-input {
  display: block;
  width: 100%;
  height: 60px;
  margin-top: 8px;
  padding: 0 20px 2px;
  border: 2px solid #aab7b8;
  border-radius: 3px;
  font-family: inherit;
  font-size: 28px;
  letter-spacing: -.35px;
  color: #16191f;
}
.adv {
  display: block;
  width: 326px;
  height: 60px;
  margin-top: 40px;
  border: 2px solid #545b64;
  border-radius: 3px;
  background: #fff;
  font-size: 27px;
  font-weight: 700;
  color: #545b64;
}
.fld-desc.conf { margin-top: 16px; letter-spacing: -.55px; }

.box-foot { position: relative; height: 22px; }
.box-foot .tail { position: absolute; left: 20px; top: -8px; }

/* bottom build bar */
.bar {
  height: 162px;
  flex: none;
  display: flex;
  padding: 20px 52px 0 60px;
  background: #283142;
  border-bottom: 3px solid #111b2a;
  color: #fff;
}
.bar small { display: block; font-size: 24px; line-height: 32px; color: #aab7b8; letter-spacing: -.35px; }
.bar-ver { width: 306px; }
.bar-ver small { margin-top: 21px; }
.bar-btn {
  height: 62px;
  border: 2px solid #545b64;
  border-radius: 3px;
  background: #fff;
  color: #545b64;
  font-size: 27px;
  font-weight: 700;
  letter-spacing: -.2px;
}
.draft { width: 306px; height: 58px; display: flex; align-items: center; justify-content: flex-start; gap: 28px; padding-left: 41px; margin-top: 1px; }
.draft svg { color: #545b64; }
.bar-sep { width: 3px; height: 120px; margin-left: 29px; background: #687078; }
.bar-lang { margin-left: 33px; }
.lang-row { display: flex; align-items: center; height: 60px; gap: 31px; margin-top: 1px; }
.lang-row b { font-size: 36px; font-weight: 600; letter-spacing: -.2px; }
.badge { height: 43px; line-height: 41px; padding: 0 17px; border-radius: 22px; background: #3f7f1e; font-size: 24px; font-weight: 500; letter-spacing: -.5px; }
.bar-lang small { margin-top: 19px; }
.bar-right { margin-left: auto; display: flex; flex-direction: column; align-items: flex-end; }
.bar-actions { display: flex; align-items: center; padding-right: 10px; }
.saved { width: 291px; height: 64px; display: flex; align-items: center; justify-content: center; gap: 6px; color: #3f8624; border-color: #d5dbdb; }
.act-sep { width: 3px; height: 60px; margin: 0 24px 0 22px; background: #687078; }
.build { width: 153px; }
.test { width: 138px; margin-left: 22px; }
.bar-note { display: flex; align-items: center; gap: 17px; margin-top: 17px; font-size: 24px; letter-spacing: -.3px; }
.bar-gap { flex: 1; }

.tools { width: 72px; flex: none; background: #fff; border-left: 2px solid #d5dbdb; padding: 24px 0 0 22px; color: #545b64; }

/* footer */
.foot {
  height: 58px;
  flex: none;
  display: flex;
  align-items: center;
  padding: 0 32px 2px 41px;
  border-top: 2px solid #414750;
  background: #252f3e;
  font-size: 24px;
  letter-spacing: -.4px;
  white-space: nowrap;
}
.f-lang { margin-left: 48px; color: #aab7b8; letter-spacing: -.3px; }
.f-lang b { font-weight: 400; color: #fff; }
.f-ext { margin-left: 5px; }
.f-right { margin-left: auto; letter-spacing: -.3px; }
.f-link { margin-left: 58px; }
.f-link + .f-link { margin-left: 49px; }

/* dock */
.dock {
  width: 2806px;
  height: 72px;
  flex: none;
  margin: 28px 0 0 37px;
  display: flex;
  align-items: flex-start;
  gap: 11.900px;
  padding: 12px 0 0 11px;
  border: 1px solid rgba(255,255,255,.18);
  border-radius: 20px;
  background: linear-gradient(90deg, #6c83b6, #7a7fb4 40%, #8678b0 70%, #a078a8);
}
.app { position: relative; width: 42px; height: 42px; flex: none; }
.app svg { display: block; width: 42px; height: 42px; }
.app.on::after {
  content: "";
  position: absolute;
  left: 18px;
  top: 51px;
  width: 5px;
  height: 5px;
  border-radius: 50%;
  background: #0a1440;
}
.app.tall svg { height: 50px; margin-top: -4px; }
.dock-badge {
  position: absolute;
  right: -9px;
  top: -7px;
  min-width: 20px;
  height: 20px;
  border-radius: 10px;
  background: #e5493c;
  color: #fff;
  font: 400 12px/20px Inter, sans-serif;
  text-align: center;
}
.ic-sep { font: 700 7px Inter, sans-serif; fill: #fff; text-anchor: middle; }
.ic-day { font: 400 24px Inter, sans-serif; fill: #222; text-anchor: middle; }
.ic-tv { font: 700 17px Inter, sans-serif; fill: #fff; }
.ic-letter { font: 700 13px Inter, sans-serif; fill: #fff; text-anchor: middle; }

.dock-sep { width: 2px; height: 52px; flex: none; margin: -3px 2px 0 7px; background: #3d4a80; }
.dock-sep.first { margin: -3px 3px 0 6px; }

.thumb { position: relative; width: 48px; flex: none; margin-top: 1px; margin-right: -6px; }
.t-dark { height: 32px; margin-top: 4px; border-top: 3px solid #111; border-bottom: 3px solid #111; background-color: #444; }
.t-beige { background: repeating-linear-gradient(#a08a82 0 1px, #c9c2bb 1px 3px); }
.t-lines { background: linear-gradient(90deg, transparent 70%, #fff 70%), repeating-linear-gradient(#e8e8e8 0 1px, #666 1px 3px); }
.t-green { background: repeating-linear-gradient(#7b8468 0 1px, #c4c8ae 1px 3px); }
.t-noise { background: linear-gradient(90deg, transparent 65%, #fff 65%) 0 16px / 100% 10px no-repeat, repeating-linear-gradient(#8a8a8a 0 1px, #c8c8c8 1px 2px, #555 2px 3px); }
.t-doc { height: 42px; background: #f7f8fb; border-top: 2px solid #4c86d6; background-image: repeating-linear-gradient(#fff 0 2px, #c4c6cc 2px 3px); }
.t-slide { height: 28px; margin-top: 7px; background: linear-gradient(90deg, #eaf0f8 55%, #d7e4f6 55%); border: 6px solid #e9eff8; box-shadow: inset 0 0 0 8px #5b8fe0; }
.t-white { height: 28px; margin-top: 7px; background: repeating-linear-gradient(90deg, #fff 0 8px, #555 8px 11px); }
.t-white.wide { width: 48px; height: 28px; background: linear-gradient(#4a5a6a 3px, #f3f5f8 3px); }
.t-table { height: 32px; margin-top: 3px; background: repeating-linear-gradient(#e9e4dc 0 3px, #fff 3px 5px); border-top: 3px solid #777; }
.t-ppt { height: 30px; margin-top: 3px; background: linear-gradient(#e8603a 3px, #f5f5f5 3px); box-shadow: inset 0 -14px 0 #2b2b2b; }
.t-navy { height: 26px; margin-top: 5px; background: linear-gradient(#14213f 70%, #f4f6fa 70%); }
.t-shop { height: 26px; margin-top: 5px; background: repeating-linear-gradient(90deg, #111 0 7px, #d9b56a 7px 10px, #fff 10px 14px); }
.t-purple { height: 28px; margin-top: 3px; background: linear-gradient(90deg, #4a1f63 18%, #f7f7fa 18%); }
.t-label { position: absolute; left: 3px; top: 29px; width: 48px; height: 14px; border-radius: 3px; background: #4f5166; color: #e8e8f0; font: 400 10px/14px Inter, sans-serif; }
.mini { position: absolute; right: 2px; bottom: -12px; width: 16px; height: 22px; border-radius: 5px; border: 2px solid #fff; }
.mini.word { background: #2b7cd3; }
.mini.keyn { background: #5b9bea; }
.mini.photos { background: conic-gradient(#f5b13a, #7ac85a, #5aa0e8, #c86cb8, #e8584a, #f5b13a); }
.mini.box { background: #b9904c; border-color: #6e5560; }
.mini.ppt { background: #d35230; }
.mini.safari { background: #2f8bea; }
.mini.slack { background: #e01e5a; }
.mini.qt { background: #0f0f10; }
.trash { flex: none; margin: -3px 0 0 6px; }
```
